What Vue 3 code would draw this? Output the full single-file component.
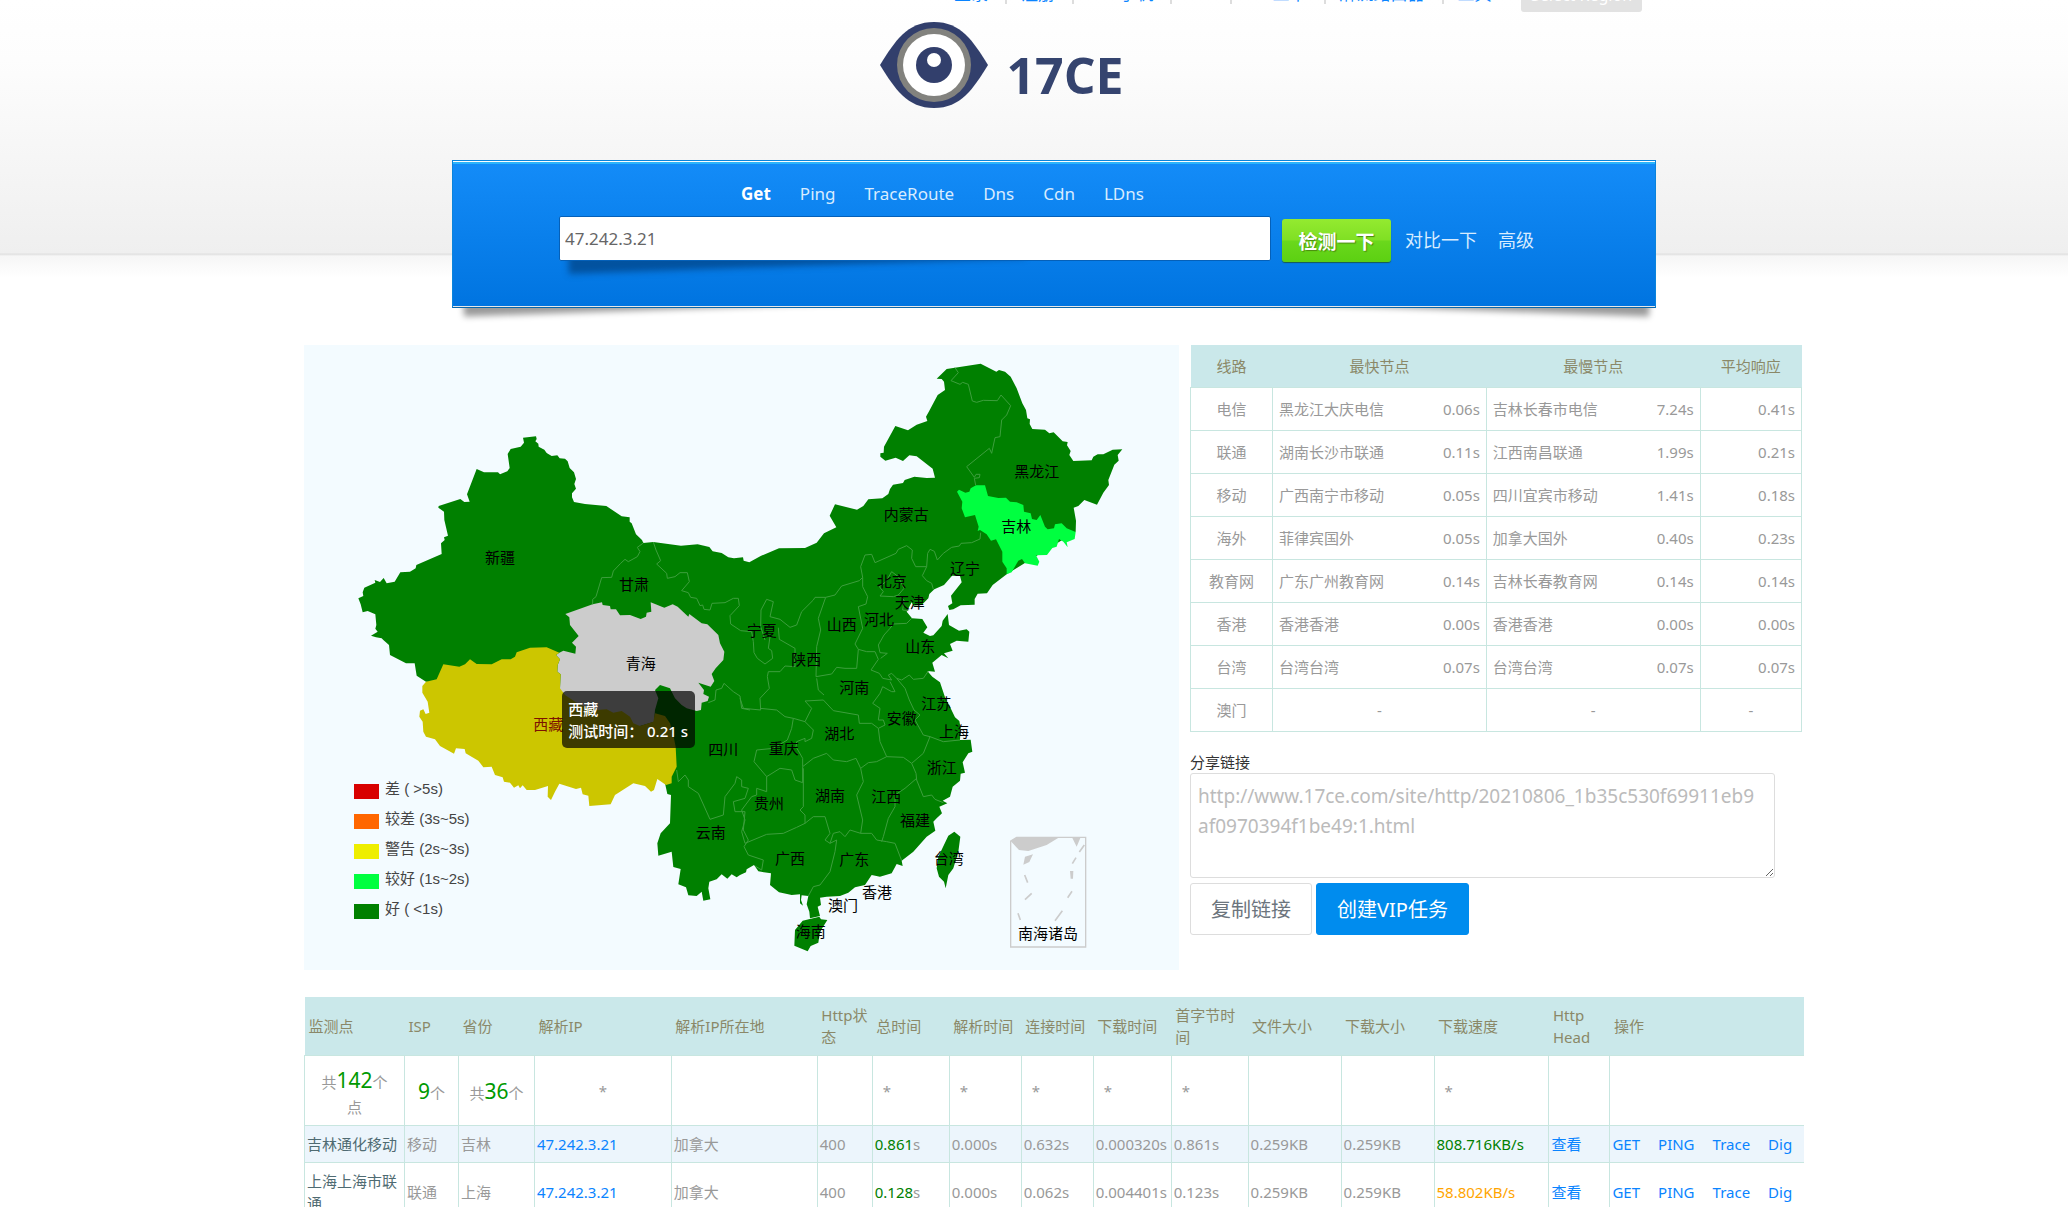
<script setup>
import { ref } from 'vue'

const navLinks = ['登录', '注册', 'APP手机', 'API', 'VIP工单', '麻流路由器', '工具']
const tabs = ['Get', 'Ping', 'TraceRoute', 'Dns', 'Cdn', 'LDns']
const activeTab = ref('Get')
const target = ref('47.242.3.21')
const shareUrl = ref('http://www.17ce.com/site/http/20210806_1b35c530f69911eb9af0970394f1be49:1.html')

const legend = [
  { label: '差 ( >5s)', tone: 'bad' },
  { label: '较差 (3s~5s)', tone: 'poor' },
  { label: '警告 (2s~3s)', tone: 'warn' },
  { label: '较好 (1s~2s)', tone: 'fair' },
  { label: '好 ( <1s)', tone: 'good' },
]

const lines = [
  ['电信', '黑龙江大庆电信', '0.06s', '吉林长春市电信', '7.24s', '0.41s'],
  ['联通', '湖南长沙市联通', '0.11s', '江西南昌联通', '1.99s', '0.21s'],
  ['移动', '广西南宁市移动', '0.05s', '四川宜宾市移动', '1.41s', '0.18s'],
  ['海外', '菲律宾国外', '0.05s', '加拿大国外', '0.40s', '0.23s'],
  ['教育网', '广东广州教育网', '0.14s', '吉林长春教育网', '0.14s', '0.14s'],
  ['香港', '香港香港', '0.00s', '香港香港', '0.00s', '0.00s'],
  ['台湾', '台湾台湾', '0.07s', '台湾台湾', '0.07s', '0.07s'],
]

const columns = [
  ['监测点', 100], ['ISP', 54], ['省份', 76], ['解析IP', 137], ['解析IP所在地', 146],
  ['Http状态', 55], ['总时间', 77], ['解析时间', 72], ['连接时间', 72], ['下载时间', 78],
  ['首字节时间', 77], ['文件大小', 93], ['下载大小', 93], ['下载速度', 115], ['Http Head', 61], ['操作', 194],
]

const results = [
  { node: '吉林通化移动', isp: '移动', prov: '吉林', total: '0.861', dns: '0.000s', conn: '0.632s', down: '0.000320s', first: '0.861s', speed: '808.716KB/s', tone: 'fast' },
  { node: '上海上海市联通', isp: '联通', prov: '上海', total: '0.128', dns: '0.000s', conn: '0.062s', down: '0.004401s', first: '0.123s', speed: '58.802KB/s', tone: 'slow' },
]
const actions = ['GET', 'PING', 'Trace', 'Dig']

// Label centres in map units
const labels = [
  ['新疆', 600, 656], ['甘肃', 1002, 735], ['青海', 1022, 972], ['四川', 1270, 1230], ['云南', 1232, 1480],
  ['黑龙江', 2210, 396], ['吉林', 2149, 563], ['内蒙古', 1819, 527], ['辽宁', 1995, 689], ['北京', 1775, 728],
  ['天津', 1829, 791], ['河北', 1737, 842], ['山西', 1625, 857], ['宁夏', 1385, 875], ['山东', 1861, 921],
  ['陕西', 1519, 960], ['河南', 1663, 1046], ['江苏', 1909, 1094], ['安徽', 1805, 1139], ['上海', 1962, 1176],
  ['湖北', 1618, 1182], ['重庆', 1451, 1229], ['浙江', 1925, 1284], ['湖南', 1590, 1370], ['江西', 1759, 1372],
  ['贵州', 1407, 1392], ['福建', 1845, 1443], ['广西', 1470, 1557], ['广东', 1663, 1560], ['台湾', 1946, 1557],
  ['香港', 1731, 1660], ['澳门', 1629, 1698], ['海南', 1532, 1776], ['南海诸岛', 2244, 1782],
]

const borders = [
  '1030,609 1012,622 1020,635 1012,650 985,665 975,658 962,670 940,693 935,712 905,713 888,770 878,778 878,793',
  '1060,606 1068,630 1082,662 1070,672 1100,700 1102,715 1125,710 1140,698 1162,698 1168,725 1145,752 1165,758 1172,772 1190,775 1200,797 1208,795 1212,808 1230,810 1236,790 1275,788 1300,775 1315,775 1318,797 1290,827 1292,852 1322,872 1355,875 1360,905 1362,938 1372,955 1395,972 1418,955 1415,932 1405,925 1410,890',
  '1965,83 1975,98 1953,122 1980,133 1988,127 2005,133 2017,183 2030,187 2050,181 2092,182 2103,165 2132,197 2120,225 2105,240 2100,290 2085,293 2075,340 2068,325 2000,380 2023,412 2028,403 2040,403 2038,413 2023,415 2027,436',
  '2042,578 2040,597 2015,608 1983,610 1978,618 1955,622 1930,640 1912,660 1903,634 1890,628 1883,640 1880,680 1847,680 1835,655 1837,630 1820,617 1795,628 1788,640 1770,648 1725,668 1715,643 1695,645 1682,680 1688,712 1678,722 1625,738 1605,765 1577,772 1545,772 1540,780 1505,815 1490,855 1470,862 1440,838 1410,830 1420,785 1400,778 1383,810 1382,860 1395,900',
  '1880,680 1867,707 1880,722 1895,730 1900,748',
  '1688,712 1688,740 1703,770 1698,792 1675,800 1688,865 1665,912 1675,928 1670,985',
  '1577,772 1555,835 1562,870 1550,920 1548,1010',
  '1835,835 1820,850 1780,852 1770,865 1752,885 1735,915 1740,938 1762,940 1742,955',
  '1675,928 1700,935 1725,935 1735,958 1713,990 1738,1000 1748,1015 1775,1020 1765,1005 1775,1000 1790,1015 1805,1020 1828,1005 1840,1018 1870,1015 1885,993',
  '1548,1010 1595,1002 1610,982 1635,985 1670,985',
  '1435,863 1438,898 1485,925 1485,980 1455,978 1440,995 1405,995 1402,1010 1408,1045 1380,1075 1382,1110 1330,1105 1320,1075',
  '1550,1015 1555,1050 1572,1065 M1380,1105 1430,1110 1455,1130 1480,1135 1475,1165 1462,1200 1420,1225 1370,1230 1362,1265 1400,1310 1440,1285 1475,1290 1485,1320 1508,1328 1508,1280',
  '1480,1135 1515,1145 1540,1170 1535,1195 1515,1205 1515,1195 1490,1205 1488,1220 1508,1255 1508,1280 1540,1255 1580,1240 1600,1260 1640,1265 1668,1255 1682,1285 1705,1268 1730,1265 1760,1250 1740,1205 1735,1165 1715,1150 1678,1150 1675,1125 1600,1112 1570,1080 1515,1083 1535,1105 1515,1145',
  '1735,1165 1755,1155 1750,1140 1735,1140 1740,1105 1718,1090 1740,1060 1748,1040 1775,1055 1785,1055 1770,1025',
  '1790,1015 1815,1045 1828,1080 1842,1110 1860,1125 1845,1140 1870,1185 1890,1190 1870,1240 1835,1270 1810,1252 1760,1250',
  '1890,1190 1930,1205 1980,1200',
  '1835,1270 1848,1300 1850,1320 1870,1370 1895,1365 1905,1378 1930,1388',
  '1850,1315 1815,1345 1785,1365 1785,1400 1765,1435 1750,1490 1745,1505',
  '1682,1285 1690,1325 1670,1365 1688,1440 1682,1480',
  '1510,1285 1510,1400 1500,1410 1515,1425 1515,1450 1540,1430 1575,1430 1590,1480 1575,1500 1590,1510 1600,1480 1620,1475 1635,1490 1650,1470 1682,1480 1715,1480 1730,1500 1760,1505 1785,1510 1805,1562',
  '1590,1510 1610,1500 1605,1535 1590,1595 1560,1635 1540,1640 1525,1668',
  '1515,1450 1490,1462 1450,1480 1400,1483 1335,1510 1325,1475 1335,1440 1325,1410',
  '1325,1410 1355,1370 1370,1365 1370,1345 1400,1355 1400,1310',
  '1130,1290 1135,1325 1155,1305 1165,1320 1165,1340 1195,1360 1230,1438 1270,1425 1275,1370 1305,1330 1310,1310 1325,1320 1325,1340 1345,1345 1335,1375 1300,1385 1305,1415 1335,1415 1330,1470 1345,1500 1332,1520 1345,1545 1390,1560 1385,1590 1365,1578',
  '1225,1088 1245,1080 1248,1050 1265,1045 1272,1030 1300,1055 1320,1068 1325,1105 1350,1110',
  '1740,768 1750,755 1738,740 1758,725 1775,695 1795,710 1812,745 1795,765 1780,770 1740,768 M1795,765 1812,780 1808,810 1825,812',
]
</script>

<template>
  <div class="page" lang="zh-CN">
    <header>
      <nav class="topbar" aria-label="站点导航">
        <a v-for="n in navLinks" :key="n" href="#">{{ n }}</a>
        <button type="button" class="region">Select Region</button>
      </nav>
      <a class="logo" href="#" aria-label="17CE">
        <svg viewBox="0 0 108 88" aria-hidden="true">
          <path fill="#323f6c" d="M0 44C15 20 27 1 54 1s39 19 54 43C93 68 81 87 54 87S15 68 0 44z" />
          <circle cx="54" cy="44" r="37" fill="#82827e" />
          <circle cx="54" cy="44" r="31" fill="#fff" />
          <circle cx="54" cy="44" r="18" fill="#323f6c" />
          <circle cx="54" cy="39" r="7" fill="#fff" />
        </svg>
        <span>17CE</span>
      </a>
    </header>

    <section class="panel">
      <ul class="tabs">
        <li v-for="t in tabs" :key="t">
          <button type="button" :class="{ active: t === activeTab }" @click="activeTab = t">{{ t }}</button>
        </li>
      </ul>
      <form class="search" @submit.prevent>
        <div class="field"><input v-model="target" type="text" aria-label="检测地址" /></div>
        <button type="submit" class="go">检测一下</button>
        <a href="#">对比一下</a>
        <a href="#">高级</a>
      </form>
    </section>

    <main>
      <div class="overview">
        <section class="map">
          <svg viewBox="12 15 2625 1875" role="img" aria-label="测试时间分布图">
            <path fill="#008000" d="M175,775 190,768 188,757 193,743 226,728 224,720 240,726 251,714 260,730 284,725 301,697 330,695 347,685 349,675 425,642 423,610 434,600 432,592 444,587 433,540 432,515 415,503 416,498 481,477 493,486 509,485 501,463 530,387 552,397 594,397 600,403 622,394 629,384 623,342 632,327 662,320 672,308 669,293 708,289 710,297 706,304 715,311 716,320 733,329 740,339 755,348 772,346 779,355 795,356 803,364 809,384 822,397 828,417 823,432 828,446 816,460 816,472 822,486 855,492 919,498 965,529 989,532 989,545 995,550 1008,583 1026,600 1030,609 1060,606 1143,617 1193,613 1228,621 1238,634 1265,639 1285,652 1302,655 1329,652 1331,662 1348,667 1382,648 1437,625 1515,624 1550,608 1572,580 1609,562 1589,527 1605,493 1671,509 1690,498 1705,478 1747,475 1765,462 1770,447 1779,434 1809,429 1814,420 1843,410 1880,414 1905,413 1898,386 1850,349 1828,346 1809,363 1787,353 1756,362 1741,350 1741,340 1751,338 1752,320 1786,258 1824,271 1850,254 1882,243 1878,230 1888,212 1913,165 1935,150 1932,125 1925,117 1910,116 1940,87 2042,71 2089,95 2097,90 2115,95 2132,110 2150,145 2167,190 2178,210 2182,235 2190,238 2189,252 2197,267 2235,269 2248,280 2261,277 2288,304 2303,306 2301,316 2312,333 2308,345 2320,363 2375,361 2380,350 2393,343 2410,343 2438,329 2467,328 2453,345 2456,362 2443,374 2425,420 2427,435 2410,458 2391,494 2353,480 2335,498 2321,503 2328,542 2327,575 2120,703 2078,735 2061,760 2033,761 2024,777 2024,794 1982,796 1960,808 1948,810 1944,798 1957,790 1953,767 1985,727 1980,708 1956,707 1932,735 1903,748 1888,762 1885,775 1865,795 1840,797 1835,787 1820,815 1836,835 1867,837 1882,862 1870,878 1890,888 1900,886 1925,858 1928,842 1943,822 1947,855 1977,872 2000,868 2008,875 2005,905 1970,902 1950,912 1958,932 1932,940 1945,955 1925,945 1897,968 1905,995 1882,993 1897,1010 1920,1027 1935,1072 1952,1105 1965,1132 1978,1143 1982,1165 1980,1200 2012,1199 2017,1235 2005,1240 1988,1267 1995,1298 1982,1301 1980,1322 1958,1340 1950,1370 1928,1382 1942,1390 1918,1400 1926,1420 1910,1435 1900,1445 1906,1472 1880,1490 1840,1535 1805,1562 1808,1578 1790,1572 1775,1600 1740,1610 1715,1605 1695,1635 1665,1642 1645,1658 1620,1668 1580,1670 1560,1673 1563,1695 1553,1700 1560,1728 1530,1735 1528,1715 1520,1693 1525,1668 1505,1666 1503,1680 1509,1697 1500,1690 1500,1663 1475,1665 1437,1657 1410,1635 1413,1600 1375,1594 1362,1575 1340,1588 1338,1597 1320,1605 1310,1612 1295,1603 1282,1616 1265,1603 1250,1618 1228,1625 1225,1645 1231,1678 1210,1682 1205,1655 1190,1668 1165,1666 1158,1642 1135,1633 1142,1587 1120,1581 1115,1535 1075,1547 1072,1510 1082,1480 1110,1450 1113,1365 1102,1362 1095,1330 1115,1280 700,1060 378,1025 350,1007 344,970 318,970 270,945 267,915 250,900 245,895 228,892 213,887 233,875 226,866 229,855 226,823 203,813 188,817 182,793z" />
            <path fill="#00ff40" d="M1971,455 1977,449 1996,458 2008,455 2012,445 2028,436 2055,436 2064,468 2095,474 2118,473 2130,485 2150,487 2170,495 2172,515 2192,520 2196,537 2210,540 2221,525 2235,560 2243,568 2262,565 2265,553 2285,550 2300,565 2327,576 2324,597 2300,607 2303,622 2290,605 2277,597 2270,620 2257,624 2241,645 2208,646 2218,665 2213,677 2175,670 2166,657 2155,662 2135,697 2120,703 2120,685 2107,665 2107,635 2088,598 2073,602 2060,583 2040,570 2033,573 2036,560 2025,525 1995,532 1985,505 1987,485z" />
            <path fill="#ccc" d="M796,822 878,793 906,787 908,795 930,798 932,808 948,808 960,826 990,825 1022,837 1038,830 1040,818 1054,815 1052,787 1093,803 1118,793 1133,800 1165,830 1168,822 1205,850 1222,853 1255,885 1260,910 1273,935 1270,960 1247,985 1235,1002 1243,1023 1232,1040 1195,1028 1212,1050 1210,1062 1227,1070 1223,1083 1205,1088 1203,1110 1190,1113 1160,1105 1145,1095 1125,1075 1110,1045 1080,1035 1065,1050 1075,1075 1065,1110 1062,1145 1020,1158 950,1170 780,1100 780,1045 782,1003 772,995 773,975 780,958 768,945 778,938 790,932 826,941 828,920 816,908 836,888 810,855 808,832z" />
            <path fill="#ccc600" d="M378,1025 410,1018 430,973 478,980 495,973 510,958 530,972 575,973 605,958 632,958 645,950 650,937 690,923 740,922 778,938 768,945 780,958 773,975 772,995 782,1003 780,1045 795,1065 840,1095 890,1110 920,1108 940,1118 965,1113 990,1130 1000,1150 1020,1158 1060,1145 1065,1120 1095,1128 1110,1150 1118,1175 1127,1220 1130,1280 1115,1310 1115,1330 1098,1335 1072,1317 1062,1350 1053,1355 1035,1338 1000,1330 945,1365 932,1393 868,1398 865,1367 848,1363 843,1343 828,1347 778,1331 765,1355 753,1380 743,1370 744,1338 705,1350 680,1350 668,1336 660,1345 655,1336 642,1343 630,1328 612,1325 608,1312 585,1305 575,1280 550,1282 535,1262 497,1240 494,1227 468,1225 462,1241 420,1218 405,1198 378,1190 370,1175 368,1145 358,1130 360,1112 370,1108 377,1122 388,1118 383,1085 367,1058 367,1038z" />
            <path fill="#008000" d="M1945,1487 1963,1475 1981,1490 1975,1535 1960,1585 1945,1605 1937,1645 1932,1625 1917,1610 1910,1585 1915,1550z" />
            <path fill="#008000" d="M1485,1770 1508,1742 1558,1730 1563,1738 1582,1740 1560,1775 1555,1808 1532,1818 1523,1834 1483,1817z" />
            <path v-for="(b, i) in borders" :key="i" :d="'M' + b" class="border" />
            <path fill="none" stroke="#ccc" stroke-width="4" d="M2132,1503 2150,1492 2357,1492 2357,1821 2132,1821z" />
            <path fill="#ccc" d="M2132,1503 2150,1492 2278,1492 2240,1515 2185,1533 2157,1530zM2317,1494 2341,1494 2330,1520zM2175,1550 2199,1543 2188,1566 2170,1574zM2310,1593 2320,1593 2319,1616 2312,1616z" />
            <path fill="none" stroke="#ccc" stroke-width="5" d="M2353,1515 2338,1536M2328,1553 2317,1571M2174,1605 2183,1628M2195,1660 2175,1679M2316,1654 2303,1673M2154,1720 2161,1740M2287,1712 2265,1742" />
            <text v-for="[name, x, y] in labels" :key="name" :x="x" :y="y + 14">{{ name }}</text>
            <text x="745" y="1169" class="hot">西藏</text>
          </svg>
          <ul class="legend">
            <li v-for="l in legend" :key="l.tone"><i :class="l.tone"></i><span>{{ l.label }}</span></li>
          </ul>
          <div class="tooltip" role="tooltip">西藏<br />测试时间： 0.21 s</div>
        </section>

        <aside>
          <table class="lines">
            <colgroup><col class="c-line" /><col class="c-node" /><col class="c-node" /><col /></colgroup>
            <thead>
              <tr><th>线路</th><th>最快节点</th><th>最慢节点</th><th>平均响应</th></tr>
            </thead>
            <tbody>
              <tr v-for="r in lines" :key="r[0]">
                <td class="mid">{{ r[0] }}</td>
                <td><div class="pair"><span>{{ r[1] }}</span><span>{{ r[2] }}</span></div></td>
                <td><div class="pair"><span>{{ r[3] }}</span><span>{{ r[4] }}</span></div></td>
                <td class="num">{{ r[5] }}</td>
              </tr>
              <tr><td class="mid">澳门</td><td class="mid">-</td><td class="mid">-</td><td class="mid">-</td></tr>
            </tbody>
          </table>
          <div class="share">
            <label for="share">分享链接</label>
            <textarea id="share" v-model="shareUrl"></textarea>
            <div class="buttons">
              <button type="button" class="copy">复制链接</button>
              <button type="button" class="vip">创建VIP任务</button>
            </div>
          </div>
        </aside>
      </div>

      <table class="results">
        <colgroup><col v-for="c in columns" :key="c[0]" :style="{ width: c[1] / 15 + '%' }" /></colgroup>
        <thead>
          <tr><th v-for="c in columns" :key="c[0]">{{ c[0] }}</th></tr>
        </thead>
        <tbody>
          <tr class="summary">
            <td class="mid">共<b>142</b>个点</td>
            <td class="mid"><b>9</b>个</td>
            <td class="mid">共<b>36</b>个</td>
            <td class="mid">*</td>
            <td></td><td></td>
            <td>*</td><td>*</td><td>*</td><td>*</td><td>*</td>
            <td></td><td></td>
            <td>*</td>
            <td></td><td></td>
          </tr>
          <tr v-for="r in results" :key="r.node">
            <td class="node">{{ r.node }}</td>
            <td>{{ r.isp }}</td>
            <td>{{ r.prov }}</td>
            <td><a href="#">47.242.3.21</a></td>
            <td>加拿大</td>
            <td>400</td>
            <td><span class="fast">{{ r.total }}</span>s</td>
            <td>{{ r.dns }}</td>
            <td>{{ r.conn }}</td>
            <td>{{ r.down }}</td>
            <td>{{ r.first }}</td>
            <td>0.259KB</td>
            <td>0.259KB</td>
            <td :class="r.tone">{{ r.speed }}</td>
            <td><a href="#">查看</a></td>
            <td><div class="actions"><a v-for="a in actions" :key="a" href="#">{{ a }}</a></div></td>
          </tr>
        </tbody>
      </table>
    </main>
  </div>
</template>

<style>
body {
  background: #fff;
}
</style>

<style scoped>
* {
  box-sizing: border-box;
}
.page {
  position: relative;
  z-index: 0;
  padding-left: 40px;
  overflow: hidden;
  background: linear-gradient(#fff 0, #fdfdfd 60px, #efefef 253px, #dfdfdf 254px, #f6f6f6 256px, #fff 278px) no-repeat;
  font: 15px/22px "Noto Sans", "Noto Sans CJK SC", sans-serif;
  color: #999;
}
button,
input,
textarea {
  font-family: inherit;
}
a {
  color: #0a84ff;
  text-decoration: none;
}
ul {
  margin: 0;
  padding: 0;
  list-style: none;
}
header {
  display: flex;
  flex-direction: column;
  align-items: center;
  height: 160px;
}
.topbar {
  display: flex;
  align-items: flex-end;
  flex: none;
  height: 30px;
  margin: -18px 0 0 488px;
  width: 688px;
  font-size: 17px;
  line-height: 20px;
  white-space: nowrap;
}
.topbar a {
  margin-bottom: 8px;
  padding-right: 17px;
}
.topbar a + a {
  padding-left: 14px;
  border-left: 2px solid #ddd;
}
.region {
  margin-left: auto;
  height: 30px;
  width: 121px;
  padding: 0 0 4px;
  border: 0;
  border-radius: 3px;
  background: #e2e2e2;
  color: #fff;
  font-size: 16px;
  line-height: 22px;
}
.logo {
  display: flex;
  align-items: center;
  gap: 18px;
  height: 88px;
  margin: 9px 104px 0 0;
  color: #35446f;
  font: bold 50px/68px "Open Sans", "Noto Sans", sans-serif;
}
.logo svg {
  width: 108px;
  height: 88px;
}
.logo span {
  margin-top: 20px;
}
.panel {
  position: relative;
  max-width: 1204px;
  margin: 0 auto;
  height: 148px;
  padding: 22px 24px 0 106px;
  border: 1px solid #0a84dc;
  border-bottom-color: #0b66a8;
  background: linear-gradient(#148cf8, #0074e0) padding-box;
  box-shadow: inset 0 1px #fff, inset 0 3px #2cb4fb, inset 0 -1px #e8e8e8;
}
.panel::before,
.panel::after {
  content: "";
  position: absolute;
  z-index: -1;
  bottom: 14px;
  left: 10px;
  width: 50%;
  height: 20px;
  box-shadow: 0 13px 6px rgba(0, 0, 0, 0.4);
  transform: rotate(-2deg);
}
.panel::after {
  left: auto;
  right: 5px;
  transform: rotate(2deg);
}
.tabs {
  display: flex;
  gap: 29px;
  margin-left: 182px;
}
.tabs button {
  padding: 0;
  border: 0;
  background: none;
  color: #d8ecff;
  font-size: 17px;
  line-height: 22px;
}
.tabs .active {
  color: #fff;
  font-weight: bold;
}
.search {
  display: flex;
  align-items: center;
  margin-top: 10px;
  font-size: 18px;
}
.field {
  position: relative;
  z-index: 0;
  flex: 0 1 712px;
}
.field::before {
  content: "";
  position: absolute;
  z-index: -1;
  left: 9px;
  bottom: 8px;
  width: 64%;
  height: 20px;
  box-shadow: 0 13px 6px rgba(0, 50, 100, 0.55);
  transform: rotate(-2deg);
}
.field input {
  display: block;
  width: 100%;
  height: 45px;
  padding: 0 5px;
  border: 1px solid #0560b8;
  border-radius: 2px;
  background: #fff;
  color: #666;
  font-size: 17px;
}
.go {
  width: 109px;
  height: 43px;
  margin: 4px 14px 0 11px;
  padding: 0;
  border: 0;
  border-radius: 3px;
  background: linear-gradient(#94ea30, #80e024 48%, #6ad81c 52%, #5cd012);
  box-shadow: 0 1px 1px #1a5a50;
  color: #fff;
  font-size: 19px;
  font-weight: bold;
  text-shadow: 1px 1px 1px #4a8a10;
}
.search a {
  margin: 3px 21px 0 0;
  color: #d8ecff;
}
main {
  max-width: 1500px;
  margin: 37px auto 0;
}
.overview {
  display: flex;
  align-items: flex-start;
  gap: 11px;
  padding-right: 2px;
}
.map {
  position: relative;
  flex: 875 1 0;
  background: #f3fbff;
}
.map svg {
  display: block;
  width: 100%;
}
.map text {
  font-size: 45px;
  text-anchor: middle;
  fill: #000;
}
.map text.hot {
  fill: #7c1200;
}
.border {
  fill: none;
  stroke: #3d9f3d;
  stroke-width: 3;
}
.legend {
  position: absolute;
  left: 50px;
  bottom: 46px;
  color: #444;
  font-family: "Liberation Sans", "Noto Sans CJK SC", sans-serif;
}
.legend li {
  display: flex;
  align-items: center;
  gap: 6px;
  height: 30px;
}
.legend i {
  width: 25px;
  height: 15px;
  margin-top: 5px;
}
.bad { background: #d80000; }
.poor { background: #ff6600; }
.warn { background: #eeee00; }
.fair { background: #00ff40; }
.good { background: #008000; }
.tooltip {
  position: absolute;
  left: 29.5%;
  top: 55.4%;
  padding: 7px 7px 6px 6px;
  border-radius: 5px;
  background: rgba(0, 0, 0, 0.7);
  color: #fff;
  white-space: nowrap;
  font-weight: 500;
}
aside {
  flex: 612 1 0;
}
table {
  width: 100%;
  border-collapse: collapse;
  table-layout: fixed;
}
th {
  background: #cae8ea;
  color: #8a8868;
  font-weight: normal;
}
td {
  border: 1px solid #c8e6e0;
  background: #fff;
}
.mid {
  text-align: center;
}
.num {
  text-align: right;
}
.c-line { width: 82px; }
.c-node { width: 35%; }
.lines th {
  height: 42px;
  padding: 0;
}
.lines td {
  height: 43px;
  padding: 0 6px;
}
.pair {
  display: flex;
  justify-content: space-between;
}
.share {
  padding-top: 19px;
}
.share label {
  display: block;
  color: #333;
}
.share textarea {
  display: block;
  width: 585px;
  max-width: 100%;
  height: 105px;
  padding: 7px 16px 7px 7px;
  border: 1px solid #ddd;
  border-radius: 3px;
  color: #bbb;
  font-size: 19px;
  line-height: 30px;
}
.buttons {
  display: flex;
  gap: 4px;
  margin-top: 5px;
}
.buttons button {
  height: 52px;
  padding: 0 20px;
  border: 1px solid #ddd;
  border-radius: 3px;
  background: #fff;
  color: #6c757d;
  font-size: 20px;
}
.buttons .vip {
  border-color: #008cee;
  background: #008cee;
  color: #fff;
}
.results {
  margin-top: 27px;
}
.results th {
  height: 58px;
  padding: 7px 3px 7px 4px;
  text-align: left;
}
.results td {
  height: 37px;
  padding: 7px 2px;
  border-right: 0;
}
.results .summary td {
  height: 70px;
  padding: 6px 10px;
}
.results .summary td.mid {
  padding: 6px 2px;
}
.results .summary td:first-child {
  padding: 6px 16px;
}
.results .summary b {
  color: #090;
  font-size: 21px;
  font-weight: normal;
  line-height: 32px;
}
.results tr:nth-child(even) td {
  background: #ecf5fc;
}
.results .node {
  color: #4f6b72;
}
.results .fast {
  color: #008000;
}
.results .slow {
  color: #ffa500;
}
.actions {
  display: flex;
  gap: 18px;
}
</style>
